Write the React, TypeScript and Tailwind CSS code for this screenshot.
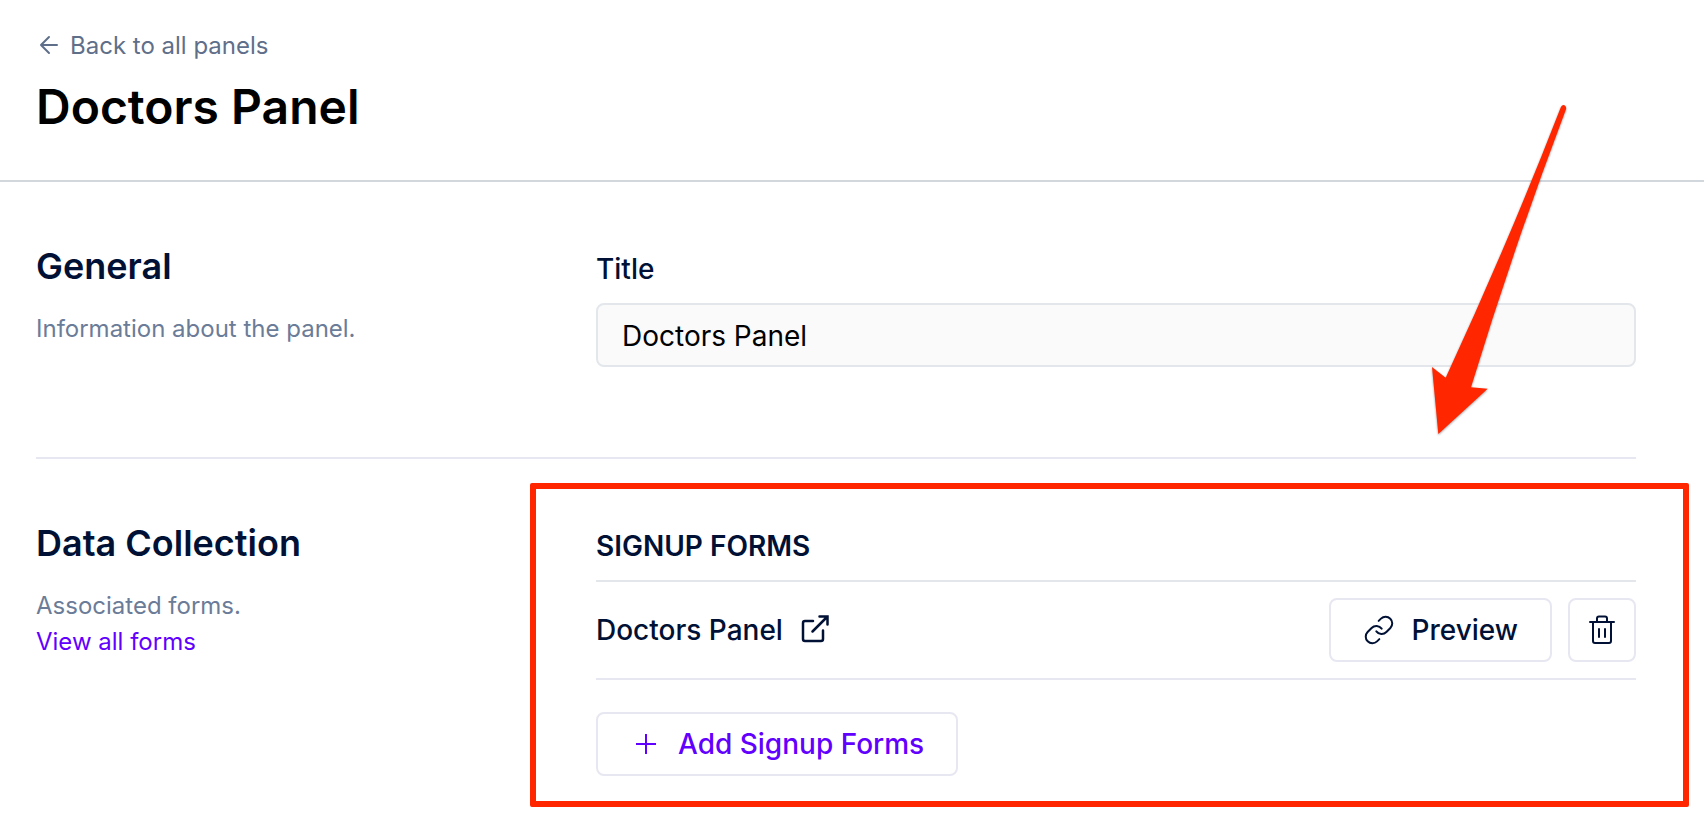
import React, { useState } from 'react';
import { Link } from 'lucide-react';

function ArrowLeftIcon() {
  return (
    <svg width="24" height="24" viewBox="0 0 24 24" fill="none" stroke="currentColor" strokeWidth="2" strokeLinecap="round" strokeLinejoin="round" aria-hidden="true">
      <path d="M21 11H5M13 3l-8 8 8 8" />
    </svg>
  );
}

function ExternalIcon() {
  return (
    <svg width="32" height="32" viewBox="0 0 32 32" fill="none" stroke="currentColor" strokeWidth="2.5" strokeLinecap="round" aria-hidden="true">
      <path d="M14 7H6a2 2 0 0 0-2 2v16a2 2 0 0 0 2 2h16a2 2 0 0 0 2-2v-8.500" strokeLinejoin="round" />
      <path d="M13.500 17.500L27.500 3.500M20.500 2.500h8v8" />
    </svg>
  );
}

function TrashIcon() {
  return (
    <svg width="32" height="32" viewBox="0 0 32 32" fill="none" stroke="currentColor" strokeWidth="2" strokeLinecap="round" strokeLinejoin="round" aria-hidden="true">
      <path d="M4 8h24M7 8v19a2 2 0 0 0 2 2h14a2 2 0 0 0 2-2V8M11 8V4.500a2 2 0 0 1 2-2h6a2 2 0 0 1 2 2V8M13 15v8M19 15v8" />
    </svg>
  );
}

function PlusIcon() {
  return (
    <svg width="32" height="32" viewBox="0 0 32 32" fill="none" stroke="currentColor" strokeWidth="2" aria-hidden="true">
      <path d="M16 6v20M6 16h20" />
    </svg>
  );
}

interface SectionProps {
  title: string;
  description: string;
  link?: string;
  children: React.ReactNode;
}

function Section({ title, description, link, children }: SectionProps) {
  return (
    <section className="grid grid-cols-[35%_65%]">
      <div>
        <h2 className="text-[36px] leading-[48px] font-semibold text-[#001135]">{title}</h2>
        <p className="mt-[21px] text-2xl leading-9 text-[#6b7c98]">{description}</p>
        {link && <a href="#forms" className="block text-2xl leading-9 text-[#6200ff]">{link}</a>}
      </div>
      {children}
    </section>
  );
}

export default function App() {
  const [title, setTitle] = useState('Doctors Panel');

  return (
    <div className="relative min-h-screen overflow-hidden bg-white font-[Inter,sans-serif] text-[#001135]">
      <header className="border-b-2 border-[#d1d7dc] px-9 pt-7 pb-[45px]">
        <a href="#panels" className="flex items-center gap-2.5 text-2xl leading-9 text-[#5f6f8a]">
          <ArrowLeftIcon />
          Back to all panels
        </a>
        <h1 className="mt-[15px] text-[48px] leading-[56px] font-semibold text-black">{title}</h1>
      </header>

      <main className="pr-17 pl-9">
        <div className="border-b-2 border-[#e7e7f2] pt-15 pb-[90px]">
          <Section title="General" description="Information about the panel.">
            <div>
              <label htmlFor="panel-title" className="mt-[7px] block text-[28px] leading-10 font-medium">Title</label>
              <input
                id="panel-title"
                value={title}
                onChange={e => setTitle(e.target.value)}
                className="mt-3.5 h-16 w-full rounded-lg border-2 border-[#e3e7eb] bg-[#fafafa] px-6 pt-0.5 text-[28px] text-black outline-none"
              />
            </div>
          </Section>
        </div>

        <div className="pt-15">
          <Section title="Data Collection" description="Associated forms." link="View all forms">
            <div>
              <h3 className="mt-[7px] text-[28px] leading-10 font-semibold">SIGNUP FORMS</h3>
              <div className="mt-3.5 flex items-center gap-4 border-y-2 border-t-[#e3e7eb] border-b-[#e7e7f2] py-4">
                <a href="#doctors" className="mr-auto flex items-center gap-4 text-[28px] leading-10 font-medium">
                  Doctors Panel
                  <ExternalIcon />
                </a>
                <button className="flex h-16 items-center gap-4 rounded-lg border-2 border-[#e7e7f2] px-8 text-[28px] font-medium">
                  <Link size={32} strokeWidth={1.5} aria-hidden="true" />
                  Preview
                </button>
                <button aria-label="Delete form" className="flex h-16 w-17 items-center justify-center rounded-lg border-2 border-[#e7e7f2]">
                  <TrashIcon />
                </button>
              </div>
              <button className="mt-8 flex h-16 items-center gap-4 rounded-lg border-2 border-[#e7e7f2] px-8 text-[28px] font-medium text-[#6200ff]">
                <PlusIcon />
                Add Signup Forms
              </button>
            </div>
          </Section>
        </div>
      </main>

      {/* callout over the signup forms */}
      <div className="pointer-events-none absolute top-[483px] right-[15px] left-[530px] h-[324px] rounded-xs border-6 border-[#ff2600]" />
      <svg className="pointer-events-none absolute top-[100px] right-[134px] drop-shadow-[0_1px_1px_rgba(0,0,0,0.4)]" width="140" height="340" viewBox="0 0 140 340" aria-hidden="true">
        <path d="M131 6.700Q132.500 4.500 134.500 5.300Q136.700 6.500 136 9.300Q83.500 148 41 287.300L57.700 288.700L8.300 334L2 267L15.700 277.700Q78.500 142 131 6.700Z" fill="#ff2600" />
      </svg>
    </div>
  );
}
